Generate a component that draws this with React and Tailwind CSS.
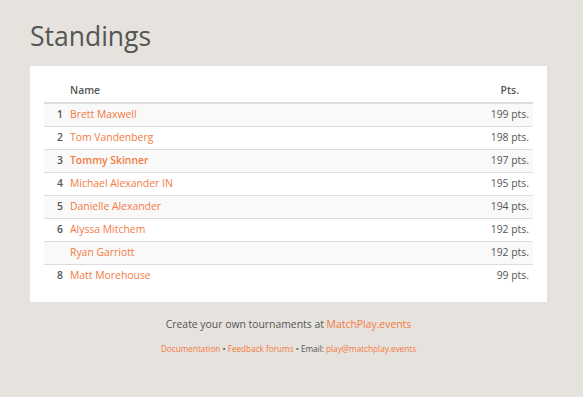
import React from "react";

const rows = [
  { n: "1", name: "Brett Maxwell", pts: "199 pts." },
  { n: "2", name: "Tom Vandenberg", pts: "198 pts." },
  { n: "3", name: "Tommy Skinner", pts: "197 pts.", bold: true },
  { n: "4", name: "Michael Alexander IN", pts: "195 pts." },
  { n: "5", name: "Danielle Alexander", pts: "194 pts." },
  { n: "6", name: "Alyssa Mitchem", pts: "192 pts." },
  { n: "", name: "Ryan Garriott", pts: "192 pts." },
  { n: "8", name: "Matt Morehouse", pts: "99 pts." },
];

export default function App() {
  return (
    <div
      className="min-h-[397px] w-full bg-[#e6e2dd] text-[#555]"
      style={{ fontFamily: '"Open Sans", sans-serif' }}
    >
      <div className="ml-[30px] w-[517px] pt-[18px]">
        <h1 className="text-[26.5px] leading-[36px] font-normal text-[#555] mb-[12px]">Standings</h1>
        <div className="bg-white px-[14px] pt-[14px] pb-[15px]">
          <table className="w-full border-collapse text-[10.4px]">
            <thead>
              <tr className="border-b-2 border-[#ddd]">
                <th className="w-[26px]"></th>
                <th className="text-left font-semibold text-[#555] h-[23px] pl-0 align-middle">Name</th>
                <th className="text-right font-semibold text-[#555] pr-[14px] align-middle">Pts.</th>
              </tr>
            </thead>
            <tbody>
              {rows.map((r, i) => (
                <tr
                  key={i}
                  className={`border-b border-[#ddd] last:border-b-0 ${i % 2 === 0 ? "bg-[#f9f9f9]" : "bg-white"}`}
                >
                  <td className="h-[23px] text-right pr-[7px] font-semibold text-[#555]">{r.n}</td>
                  <td className={`text-[#f47a42] ${r.bold ? "font-semibold" : ""}`}>{r.name}</td>
                  <td className="text-right pr-[4px] text-[#555]">{r.pts}</td>
                </tr>
              ))}
            </tbody>
          </table>
        </div>
        <div className="text-center mt-[15px] text-[10.4px] text-[#555]">
          Create your own tournaments at <span className="text-[#f47a42]">MatchPlay.events</span>
        </div>
        <div className="text-center mt-[10px] text-[8.2px] text-[#555]">
          <span className="text-[#f47a42]">Documentation</span> • <span className="text-[#f47a42]">Feedback forums</span> • Email: <span className="text-[#f47a42]">play@matchplay.events</span>
        </div>
      </div>
    </div>
  );
}
